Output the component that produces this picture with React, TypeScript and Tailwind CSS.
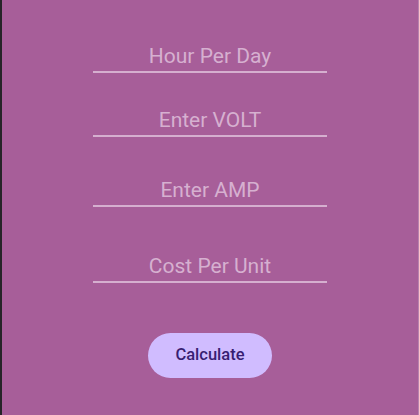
const FIELDS = [
  { label: "Hour Per Day", gap: "mt-[42px]" },
  { label: "Enter VOLT", gap: "mt-[33px]" },
  { label: "Enter AMP", gap: "mt-[39px]" },
  { label: "Cost Per Unit", gap: "mt-[45px]" },
];

export default function App() {
  return (
    <div
      className="flex h-[415px] w-full flex-col items-center border-l-2 border-r border-l-[#262428] border-r-[#b684ad] bg-[#a75e99]"
      style={{ fontFamily: "Roboto, 'Liberation Sans', sans-serif" }}
    >
      {FIELDS.map((f) => (
        <div
          key={f.label}
          className={`${f.gap} w-[234px] border-b-2 border-[#d5afcf] pb-[1px] text-center text-[21px] leading-[28px] text-[#d6b0d0]`}
        >
          {f.label}
        </div>
      ))}

      {/* Calculate button */}
      <button className="mt-[50px] h-[45px] w-[124px] rounded-full bg-[#d0bcff] text-[16.5px] font-medium text-[#381e72]">
        Calculate
      </button>
    </div>
  );
}
